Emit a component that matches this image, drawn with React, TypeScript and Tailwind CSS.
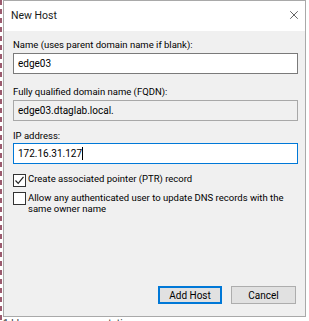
import { X } from "lucide-react";

export default function App() {
    return (
        <div className="relative w-[309px] h-[321px] overflow-hidden bg-white font-['Roboto',sans-serif] text-[9.5px] text-black">
            {/* background window strip on the left */}
            <div className="absolute left-0 top-0 w-[2px] h-[321px] bg-[repeating-linear-gradient(to_bottom,#9b5a6e_0_5px,#ffffff_5px_9px)]" />

            <div className="ml-[3px] w-[303px] h-[317px] flex flex-col border border-[#a9a9a9] bg-[#f0f0f0]">
                {/* title bar */}
                <div className="h-[30px] flex items-center justify-between bg-white pl-[7px] pr-[4px]">
                    <span className="text-[10.5px] text-[#1a1a1a]">New Host</span>
                    <X size={14} strokeWidth={1.3} className="text-[#333] mt-[-2px]" />
                </div>

                {/* body */}
                <div className="flex-1 flex flex-col pl-[9px] pr-[7px] pt-[7px] pb-[12px]">
                    {label("Name (uses parent domain name if blank):")}
                    <div className="mt-[1px] h-[21px] flex items-center border border-[#7a7a7a] bg-white px-[4px] text-[10px]">edge03</div>

                    <div className="mt-[11px]">{label("Fully qualified domain name (FQDN):")}</div>
                    <div className="mt-[1px] h-[21px] flex items-center border border-[#a8a8a8] bg-[#f0f0f0] px-[4px] text-[10px]">edge03.dtaglab.local.</div>

                    <div className="mt-[8px]">{label("IP address:")}</div>
                    <div className="mt-[0px] h-[21px] flex items-center border border-[#0078d7] bg-white px-[4px] text-[10px]">
                        172.16.31.127<span className="w-[1px] h-[13px] bg-black" />
                    </div>

                    <div className="mt-[10px] flex items-start gap-[2px]">
                        {checkbox(true)}
                        <span className="leading-[12px] mt-[-1px]">Create associated pointer (PTR) record</span>
                    </div>
                    <div className="mt-[5px] flex items-start gap-[2px]">
                        {checkbox(false)}
                        <span className="leading-[11px]">Allow any authenticated user to update DNS records with the same owner name</span>
                    </div>

                    <div className="mt-auto flex justify-end gap-[9px] pr-[2px] text-[10px]">
                        <button className="w-[64px] h-[18px] flex items-center justify-center border-2 border-[#0078d7] bg-[#e1e1e1]">Add Host</button>
                        <button className="w-[65px] h-[18px] flex items-center justify-center border border-[#adadad] bg-[#e1e1e1]">Cancel</button>
                    </div>
                </div>
            </div>

            {/* text of the window behind */}
            <div className="flex text-[10px] text-[#333] leading-[12px] mt-[1px]">
                <span className="pl-[3px] w-[103px]">1.bb</span>
                <span>static</span>
            </div>
        </div>
    );
}

// dialog labels
const label = (text: string) => {
    return <div className="leading-[14px]">{text}</div>;
};

// windows style checkbox
const checkbox = (checked: boolean) => {
    return (
        <div className="shrink-0 w-[13px] h-[13px] flex items-center justify-center border border-[#333] bg-white">
            {checked && (
                <svg width="11" height="11" viewBox="0 0 11 11">
                    <path d="M1.5 5.5 L4.2 8.3 L9.5 1.8" fill="none" stroke="#222" strokeWidth="1.2" />
                </svg>
            )}
        </div>
    );
};
